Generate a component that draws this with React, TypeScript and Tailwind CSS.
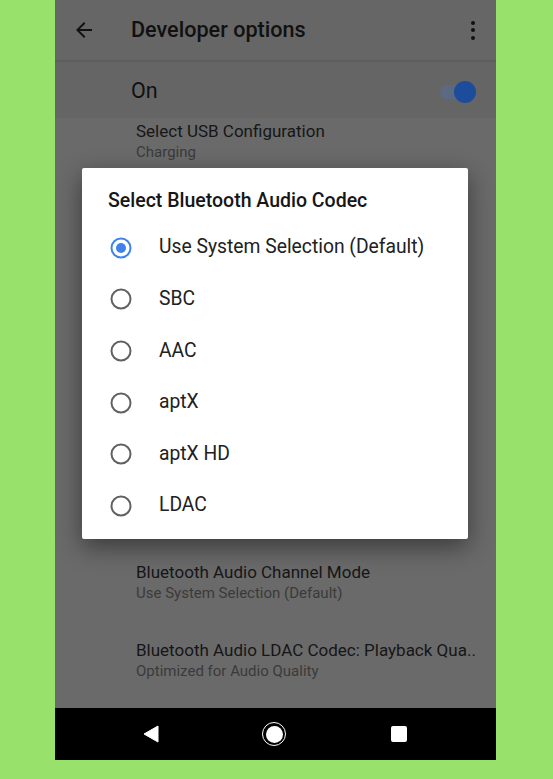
import React from "react";

const font = { fontFamily: "Roboto, 'Noto Sans', sans-serif" };

function Radio({ checked }: { checked?: boolean }) {
  return (
    <svg width="22" height="22" viewBox="0 0 22 22" className="shrink-0">
      <circle cx="11" cy="11" r="9.5" fill="none" stroke={checked ? "#3f82ee" : "#616161"} strokeWidth="2" />
      {checked && <circle cx="11" cy="11" r="5" fill="#3f82ee" />}
    </svg>
  );
}

export default function App() {
  const options = ["Use System Selection (Default)", "SBC", "AAC", "aptX", "aptX HD", "LDAC"];
  return (
    <div className="w-[553px] h-[779px] bg-[#98e16a] pl-[55px] flex flex-col" style={font}>
      <div className="relative w-[441px] h-[760px] flex flex-col bg-[#6a6a6a] overflow-hidden">
        {/* header */}
        <div className="h-[60px] bg-[#666666] flex items-center pl-[17px] pr-[11px] shrink-0">
          <svg width="24" height="24" viewBox="0 0 24 24" fill="#121212">
            <path d="M20 11H7.83l5.59-5.59L12 4l-8 8 8 8 1.41-1.41L7.83 13H20v-2z" />
          </svg>
          <span className="ml-[35px] text-[21.6px] font-medium text-[#111111] leading-none">Developer options</span>
          <div className="ml-auto w-[24px] h-[24px] flex flex-col items-center justify-center gap-[3.5px]">
            <span className="w-[4px] h-[4px] rounded-full bg-[#111]" />
            <span className="w-[4px] h-[4px] rounded-full bg-[#111]" />
            <span className="w-[4px] h-[4px] rounded-full bg-[#111]" />
          </div>
        </div>
        <div className="h-[3px] bg-gradient-to-b from-[#5a5a5a] to-[#656565] shrink-0" />
        {/* On row */}
        <div className="h-[55px] bg-[#656565] flex items-center pl-[76px] pr-[20px] pt-[2px] shrink-0">
          <span className="text-[21.5px] text-[#111111]">On</span>
          <div className="ml-auto relative w-[36px] h-[22px] flex items-center">
            <div className="w-[34px] h-[14px] rounded-full bg-[#5b6a80]" />
            <div className="absolute right-0 w-[22px] h-[22px] rounded-full bg-[#1d4c9c]" />
          </div>
        </div>
        {/* list */}
        <div className="pl-[81px] pt-[2px]">
          <div className="text-[17px] leading-[22px] text-[#161616]">Select USB Configuration</div>
          <div className="text-[15px] leading-[20px] text-[#3a3a3a]">Charging</div>
        </div>
        <div className="h-[399px] shrink-0" />
        <div className="pl-[81px]">
          <div className="text-[17px] leading-[22px] text-[#161616] whitespace-nowrap">Bluetooth Audio Channel Mode</div>
          <div className="text-[15px] leading-[20px] text-[#3a3a3a]">Use System Selection (Default)</div>
        </div>
        <div className="h-[36px] shrink-0" />
        <div className="pl-[81px]">
          <div className="text-[17px] leading-[22px] text-[#161616] whitespace-nowrap">Bluetooth Audio LDAC Codec: Playback Qua..</div>
          <div className="text-[15px] leading-[20px] text-[#3a3a3a]">Optimized for Audio Quality</div>
        </div>
        <div className="flex-1" />
        {/* nav bar */}
        <div className="h-[52px] bg-black flex items-center shrink-0">
          <div className="absolute left-[88px]">
            <svg width="16" height="18" viewBox="0 0 16 18">
              <path d="M15 1 L15 17 L1 9 Z" fill="white" stroke="white" strokeWidth="1" strokeLinejoin="round" />
            </svg>
          </div>
          <div className="absolute left-[207px] w-[24px] h-[24px] rounded-full border-[1.5px] border-white flex items-center justify-center">
            <div className="w-[17px] h-[17px] rounded-full bg-white" />
          </div>
          <div className="absolute left-[336px] w-[16px] h-[16px] rounded-[2px] bg-white" />
        </div>

        {/* dialog */}
        <div className="absolute left-[27px] top-[168px] w-[386px] h-[371px] bg-white rounded-[2px] shadow-[0_8px_24px_rgba(0,0,0,0.45)] flex flex-col pt-[21px]">
          <div className="pl-[26px] text-[19.5px] leading-[24px] font-medium text-[#161616]">Select Bluetooth Audio Codec</div>
          <div className="mt-[9px] flex flex-col">
            {options.map((o, i) => (
              <div key={o} className="h-[51.6px] flex items-center pl-[28px]">
                <Radio checked={i === 0} />
                <span className="ml-[27px] text-[19.3px] text-[#212121]">{o}</span>
              </div>
            ))}
          </div>
        </div>
      </div>
    </div>
  );
}
